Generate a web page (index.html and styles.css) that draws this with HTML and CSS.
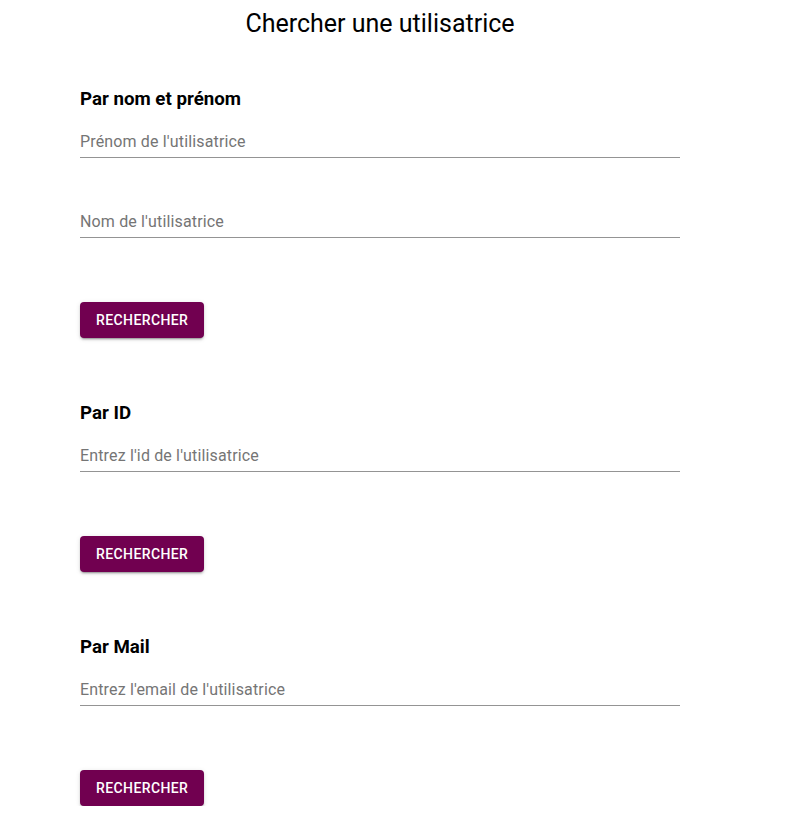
FILE: index.html
```html
<!DOCTYPE html>
<html lang="fr">
<head>
<meta charset="utf-8">
<title>Chercher une utilisatrice</title>
<link rel="stylesheet" href="styles.css">
</head>
<body>
<div class="page">
  <h1 class="title">Chercher une utilisatrice</h1>

  <section class="section">
    <h2 class="section-title">Par nom et prénom</h2>
    <div class="field"><input class="input" type="text" placeholder="Prénom de l'utilisatrice"></div>
    <div class="field field-next"><input class="input" type="text" placeholder="Nom de l'utilisatrice"></div>
    <button class="btn" type="button">Rechercher</button>
  </section>

  <section class="section">
    <h2 class="section-title">Par ID</h2>
    <div class="field"><input class="input" type="text" placeholder="Entrez l'id de l'utilisatrice"></div>
    <button class="btn" type="button">Rechercher</button>
  </section>

  <section class="section">
    <h2 class="section-title">Par Mail</h2>
    <div class="field"><input class="input" type="text" placeholder="Entrez l'email de l'utilisatrice"></div>
    <button class="btn" type="button">Rechercher</button>
  </section>
</div>
</body>
</html>
```

FILE: styles.css
```css
* { box-sizing: border-box; }

body {
  margin: 8px;
  font-family: Roboto, "Liberation Sans", sans-serif;
  color: #000;
  background: #fff;
}

.page {
  width: 600px;
  margin-left: 72px;
  display: flex;
  flex-direction: column;
}

.title {
  margin: 0;
  font-size: 25px;
  font-weight: 400;
  line-height: 32px;
  text-align: center;
}

.section {
  display: flex;
  flex-direction: column;
  align-items: flex-start;
  margin-top: 46px;
}

.section + .section { margin-top: 62px; }

.section-title {
  margin: 0;
  padding-top: 1px;
  font-size: 18.72px;
  font-weight: 700;
  line-height: 24px;
}

.field {
  width: 600px;
  padding-top: 19px;
  padding-bottom: 3px;
  border-bottom: 1px solid #949494;
}

.field-next { margin-top: 33px; }

.input {
  display: block;
  width: 100%;
  border: 0;
  padding: 0;
  margin: 0;
  outline: none;
  background: transparent;
  font-family: inherit;
  font-size: 16px;
  line-height: 24px;
  height: 24px;
  color: #222;
  letter-spacing: 0.15px;
}

.input::placeholder { color: #757575; opacity: 1; }

.btn {
  margin-top: 64px;
  height: 36px;
  padding: 0 16px;
  border: 0;
  border-radius: 4px;
  background: #710050;
  color: #fff;
  font-family: inherit;
  font-size: 14px;
  font-weight: 500;
  letter-spacing: 0.4px;
  text-transform: uppercase;
  box-shadow: 0 3px 1px -2px rgba(0,0,0,0.2), 0 2px 2px 0 rgba(0,0,0,0.14), 0 1px 5px 0 rgba(0,0,0,0.12);
  cursor: pointer;
}
```
